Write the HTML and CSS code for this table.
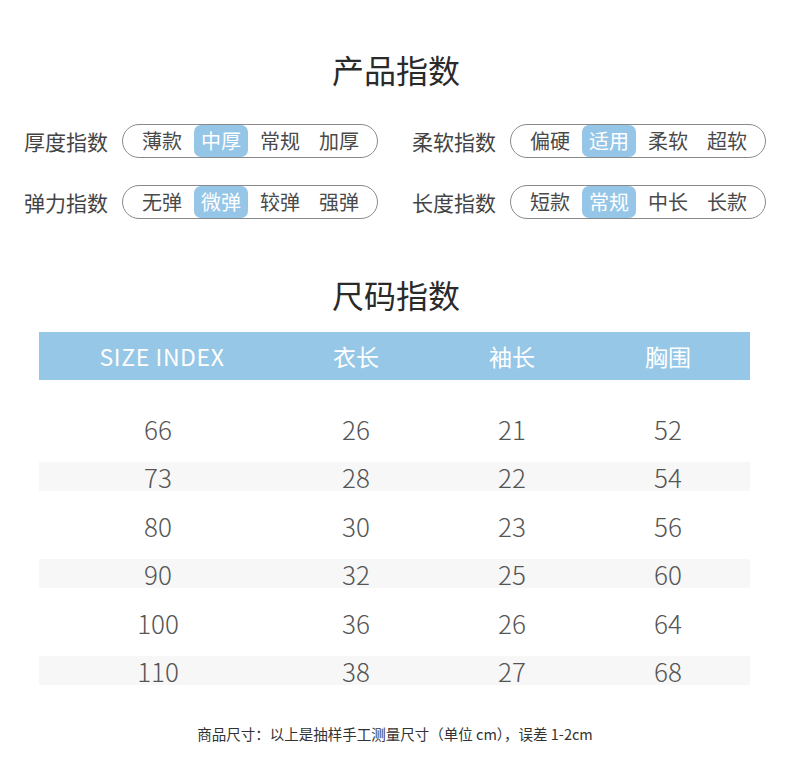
FILE: index.html
```html
<!DOCTYPE html>
<html lang="zh-CN">
<head>
<meta charset="utf-8">
<title>产品指数</title>
<link rel="stylesheet" href="styles.css">
</head>
<body>
<main class="page">
  <h1 class="title">产品指数</h1>
  <section class="indices">
    <div class="index">
      <span class="index-label">厚度指数</span>
      <div class="pill"><span class="opt">薄款</span><span class="opt on">中厚</span><span class="opt">常规</span><span class="opt">加厚</span></div>
    </div>
    <div class="index">
      <span class="index-label">柔软指数</span>
      <div class="pill"><span class="opt">偏硬</span><span class="opt on">适用</span><span class="opt">柔软</span><span class="opt">超软</span></div>
    </div>
    <div class="index">
      <span class="index-label">弹力指数</span>
      <div class="pill"><span class="opt">无弹</span><span class="opt on">微弹</span><span class="opt">较弹</span><span class="opt">强弹</span></div>
    </div>
    <div class="index">
      <span class="index-label">长度指数</span>
      <div class="pill"><span class="opt">短款</span><span class="opt on">常规</span><span class="opt">中长</span><span class="opt">长款</span></div>
    </div>
  </section>

  <h2 class="title title-size">尺码指数</h2>
  <section class="size-table">
    <div class="row head">
      <span class="first">SIZE INDEX</span><span>衣长</span><span>袖长</span><span>胸围</span>
    </div>
    <div class="body">
      <div class="row"><span>66</span><span>26</span><span>21</span><span>52</span></div>
      <div class="row alt"><span>73</span><span>28</span><span>22</span><span>54</span></div>
      <div class="row"><span>80</span><span>30</span><span>23</span><span>56</span></div>
      <div class="row alt"><span>90</span><span>32</span><span>25</span><span>60</span></div>
      <div class="row"><span>100</span><span>36</span><span>26</span><span>64</span></div>
      <div class="row alt"><span>110</span><span>38</span><span>27</span><span>68</span></div>
    </div>
  </section>
  <p class="note">商品尺寸：以上是抽样手工测量尺寸（单位 cm），误差 1-2cm</p>
</main>
</body>
</html>
```

FILE: styles.css
```css
* { box-sizing: border-box; }

html, body {
  margin: 0;
  padding: 0;
  background: #ffffff;
}

body {
  font-family: "Noto Sans CJK SC", "Noto Sans", sans-serif;
  color: #333;
}

.page {
  width: 790px;
  padding-top: 49px;
}

.title {
  margin: 0;
  text-align: center;
  font-size: 32px;
  font-weight: 400;
  line-height: 40px;
  color: #2a2a2a;
  padding-left: 2px;
}

.indices {
  display: grid;
  grid-template-columns: auto auto;
  justify-content: center;
  column-gap: 34px;
  row-gap: 27px;
  margin-top: 35px;
}

.index {
  display: flex;
  align-items: center;
  gap: 13px;
}

.index-label {
  font-size: 21px;
  line-height: 34px;
  color: #444;
  width: 85px;
  white-space: nowrap;
}

.pill {
  display: flex;
  align-items: center;
  gap: 5px;
  width: 256px;
  height: 34px;
  padding: 0 11px 0 12px;
  border: 1px solid #8a8a8a;
  border-radius: 17px;
}

.opt {
  width: 54px;
  height: 32px;
  line-height: 32px;
  text-align: center;
  font-size: 20px;
  color: #4a4a4a;
  border-radius: 7px;
}

.opt.on {
  background: #95c6e7;
  color: #fff;
}

.title-size {
  margin-top: 55px;
}

.size-table {
  margin: 18px 0 0 39px;
  width: 711px;
}

.row {
  display: grid;
  grid-template-columns: 238px 158px 154px 158px;
  align-items: center;
  text-align: center;
}

.row.head {
  height: 48px;
  background: #96c7e7;
  color: #fff;
  font-size: 23px;
}

.row.head .first {
  padding-left: 8px;
  letter-spacing: 0.6px;
}

.body {
  display: flex;
  flex-direction: column;
  gap: 19.6px;
  margin-top: 33.5px;
}

.body .row {
  height: 29px;
  font-size: 26px;
  font-weight: 300;
  color: #555;
  line-height: 29px;
}

.body .row.alt {
  background: #f7f7f7;
}

.note {
  margin: 39px 0 0;
  text-align: center;
  font-size: 14.5px;
  line-height: 20px;
  color: #333;
}
```
